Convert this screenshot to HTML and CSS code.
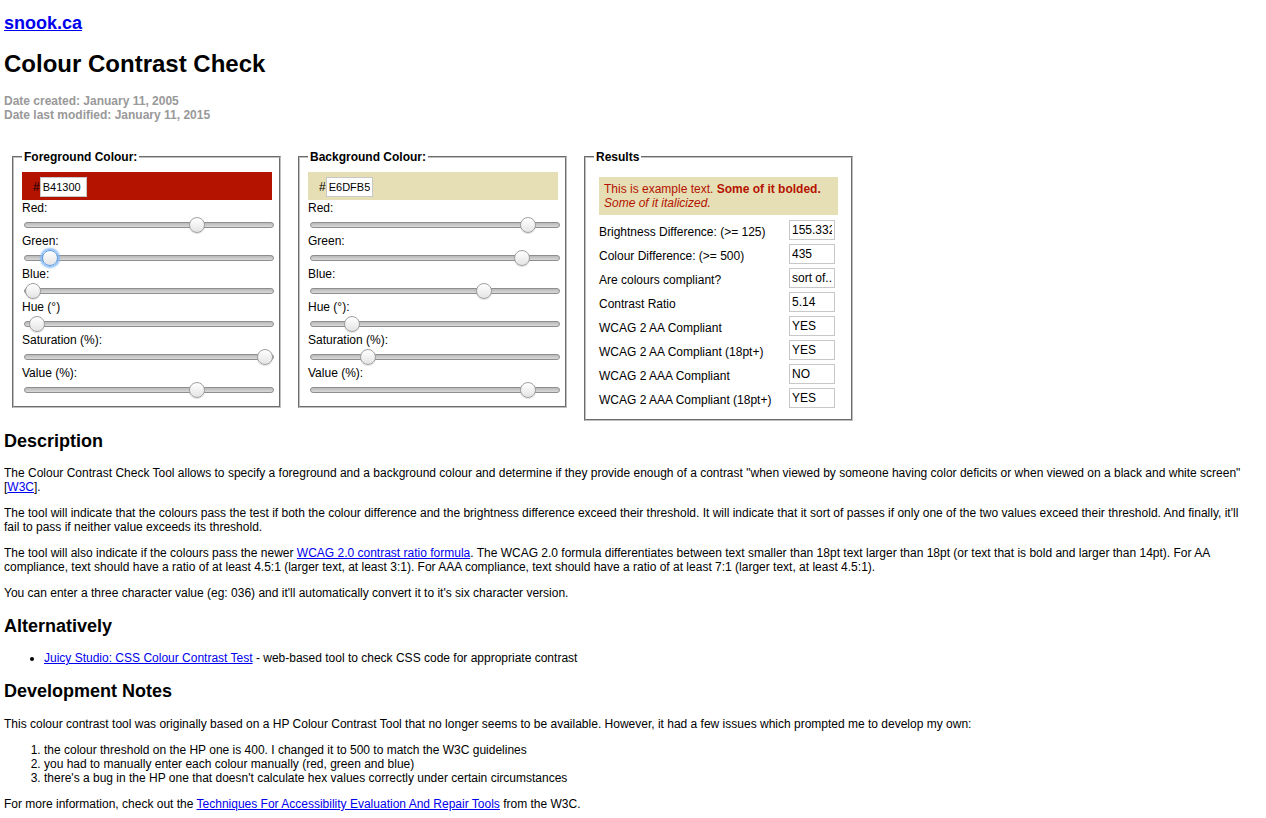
FILE: index.html
```html
<!DOCTYPE html>
<html lang="en">
<head>
<meta charset="utf-8">
<title>Colour Contrast Check</title>
<link rel="stylesheet" href="styles.css">
</head>
<body>
<h1 class="site"><a href="#">snook.ca</a></h1>
<h2 class="title">Colour Contrast Check</h2>
<p class="dates">Date created: January 11, 2005<br>Date last modified: January 11, 2015</p>

<div class="tools">
  <fieldset class="panel">
    <legend>Foreground Colour:</legend>
    <div class="swatch swatch-fg"><span class="hash">#</span><input class="hex" type="text" value="B41300"></div>
    <label class="lbl">Red:</label>
    <input class="slider" type="range" min="0" max="255" step="any" value="180">
    <label class="lbl">Green:</label>
    <input class="slider focused" type="range" min="0" max="255" step="any" value="19">
    <label class="lbl">Blue:</label>
    <input class="slider" type="range" min="0" max="255" step="any" value="0">
    <label class="lbl">Hue (°)</label>
    <input class="slider" type="range" min="0" max="360" step="any" value="6.33">
    <label class="lbl">Saturation (%):</label>
    <input class="slider" type="range" min="0" max="100" step="any" value="100">
    <label class="lbl">Value (%):</label>
    <input class="slider" type="range" min="0" max="100" step="any" value="70.6">
  </fieldset>

  <fieldset class="panel">
    <legend>Background Colour:</legend>
    <div class="swatch swatch-bg"><span class="hash">#</span><input class="hex" type="text" value="E6DFB5"></div>
    <label class="lbl">Red:</label>
    <input class="slider" type="range" min="0" max="255" step="any" value="230">
    <label class="lbl">Green:</label>
    <input class="slider" type="range" min="0" max="255" step="any" value="223">
    <label class="lbl">Blue:</label>
    <input class="slider" type="range" min="0" max="255" step="any" value="181">
    <label class="lbl">Hue (°):</label>
    <input class="slider" type="range" min="0" max="360" step="any" value="51.4">
    <label class="lbl">Saturation (%):</label>
    <input class="slider" type="range" min="0" max="100" step="any" value="21.3">
    <label class="lbl">Value (%):</label>
    <input class="slider" type="range" min="0" max="100" step="any" value="90.2">
  </fieldset>

  <fieldset class="panel results">
    <legend>Results</legend>
    <div class="sample">This is example text. <strong>Some of it bolded.</strong> <em>Some of it italicized.</em></div>
    <div class="rows">
      <span class="rlabel">Brightness Difference: (&gt;= 125)</span><input class="rval" type="text" value="155.332">
      <span class="rlabel">Colour Difference: (&gt;= 500)</span><input class="rval" type="text" value="435">
      <span class="rlabel">Are colours compliant?</span><input class="rval" type="text" value="sort of..">
      <span class="rlabel">Contrast Ratio</span><input class="rval" type="text" value="5.14">
      <span class="rlabel">WCAG 2 AA Compliant</span><input class="rval" type="text" value="YES">
      <span class="rlabel">WCAG 2 AA Compliant (18pt+)</span><input class="rval" type="text" value="YES">
      <span class="rlabel">WCAG 2 AAA Compliant</span><input class="rval" type="text" value="NO">
      <span class="rlabel">WCAG 2 AAA Compliant (18pt+)</span><input class="rval" type="text" value="YES">
    </div>
  </fieldset>
</div>

<h2 class="section section-first">Description</h2>
<p>The Colour Contrast Check Tool allows to specify a foreground and a background colour and determine if they provide enough of a contrast "when viewed by someone having color deficits or when viewed on a black and white screen" [<a href="#">W3C</a>].</p>
<p>The tool will indicate that the colours pass the test if both the colour difference and the brightness difference exceed their threshold. It will indicate that it sort of passes if only one of the two values exceed their threshold. And finally, it'll fail to pass if neither value exceeds its threshold.</p>
<p>The tool will also indicate if the colours pass the newer <a href="#">WCAG 2.0 contrast ratio formula</a>. The WCAG 2.0 formula differentiates between text smaller than 18pt text larger than 18pt (or text that is bold and larger than 14pt). For AA compliance, text should have a ratio of at least 4.5:1 (larger text, at least 3:1). For AAA compliance, text should have a ratio of at least 7:1 (larger text, at least 4.5:1).</p>
<p>You can enter a three character value (eg: 036) and it'll automatically convert it to it's six character version.</p>

<h2 class="section">Alternatively</h2>
<ul>
  <li><a href="#">Juicy Studio: CSS Colour Contrast Test</a> - web-based tool to check CSS code for appropriate contrast</li>
</ul>

<h2 class="section section-notes">Development Notes</h2>
<p>This colour contrast tool was originally based on a HP Colour Contrast Tool that no longer seems to be available. However, it had a few issues which prompted me to develop my own:</p>
<ol>
  <li>the colour threshold on the HP one is 400. I changed it to 500 to match the W3C guidelines</li>
  <li>you had to manually enter each colour manually (red, green and blue)</li>
  <li>there's a bug in the HP one that doesn't calculate hex values correctly under certain circumstances</li>
</ol>
<p>For more information, check out the <a href="#">Techniques For Accessibility Evaluation And Repair Tools</a> from the W3C.</p>
</body>
</html>
```

FILE: styles.css
```css
html {
  background: #fff;
}

body {
  margin: 0;
  padding: 0 12px 20px 4px;
  font: 12px/14px "Liberation Sans", Arial, Helvetica, sans-serif;
  color: #000;
}

a {
  color: #0000ee;
}

.site {
  font-size: 18px;
  line-height: 21px;
  font-weight: bold;
  margin: 13px 0 0;
}

.title {
  font-size: 24px;
  line-height: 28px;
  font-weight: bold;
  margin: 16px 0 0;
}

.dates {
  margin: 16px 0 0;
  font-weight: bold;
  color: #999;
}

.tools {
  display: flex;
  align-items: flex-start;
  gap: 17px;
  margin: 28px 0 0 8px;
}

.panel {
  box-sizing: border-box;
  width: 269px;
  min-width: 0;
  margin: 0;
  padding: 8px 7px 7px 8px;
  border: 2px groove #c0c0c0;
}

.panel legend {
  font-weight: bold;
  line-height: 14px;
  padding: 0 2px;
}

.swatch {
  display: flex;
  align-items: center;
  box-sizing: border-box;
  width: 250px;
  height: 28px;
  margin-bottom: 1px;
  padding: 5px 0 3px 11px;
}

.swatch-fg {
  background: #b41300;
}

.swatch-bg {
  background: #e6dfb5;
}

.hash {
  color: #000;
}

.hex {
  box-sizing: border-box;
  width: 47px;
  height: 20px;
  margin: 0;
  padding: 0 2px;
  border: 1px solid #c8c8c8;
  background: #fff;
  font: 11px "Liberation Sans", Arial, sans-serif;
  color: #000;
}

.lbl {
  display: block;
  line-height: 14px;
}

.slider {
  -webkit-appearance: none;
  appearance: none;
  display: block;
  width: 250px;
  height: 16px;
  margin: 2px 0 1px 2px;
  padding: 0;
  background: transparent;
}

.slider::-webkit-slider-runnable-track {
  height: 6px;
  box-sizing: border-box;
  border: 1px solid #8e8e8e;
  border-radius: 3px;
  background: linear-gradient(#b9b9b9, #d9d9d9);
}

.slider::-webkit-slider-thumb {
  -webkit-appearance: none;
  appearance: none;
  box-sizing: border-box;
  width: 16px;
  height: 16px;
  margin-top: -6px;
  border-radius: 50%;
  border: 1px solid #a0a0a0;
  background: linear-gradient(#ffffff, #e4e4e4);
  box-shadow: 0 1px 1px rgba(0, 0, 0, 0.12);
}

.slider.focused::-webkit-slider-thumb {
  border-color: #5b9be8;
  box-shadow: 0 0 2px 2px #8dbcf3;
}

.results {
  padding: 8px 8px 7px 8px;
}

.sample {
  margin: 5px;
  padding: 5px;
  background: #e6dfb5;
  color: #b41300;
}

.rows {
  display: grid;
  grid-template-columns: 1fr 46px;
  grid-auto-rows: 24px;
  margin: 0 8px 0 5px;
}

.rlabel {
  padding-top: 5px;
  line-height: 14px;
}

.rval {
  box-sizing: border-box;
  width: 46px;
  height: 20px;
  margin: 0;
  padding: 0 2px;
  border: 1px solid #c8c8c8;
  font: 12px "Liberation Sans", Arial, sans-serif;
  color: #000;
  background: #fff;
}

.section {
  font-size: 18px;
  line-height: 21px;
  font-weight: bold;
  margin: 16px 0 14px;
}

.section-first {
  margin-top: 10px;
}

.section-notes {
  margin-bottom: 15px;
}

p {
  margin: 12px 0;
}

ul,
ol {
  margin: 12px 0;
  padding-left: 40px;
}

ul {
  margin-bottom: 16px;
}
```
